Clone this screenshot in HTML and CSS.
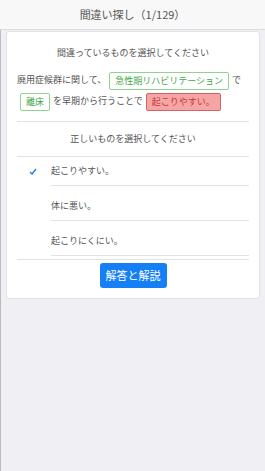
FILE: index.html
```html
<!DOCTYPE html>
<html lang="ja">
<head>
  <meta charset="UTF-8">
  <meta name="viewport" content="width=device-width, initial-scale=1.0">
  <title>間違い探し</title>
  <link rel="stylesheet" href="styles.css">
</head>
<body>
  <header class="top-bar">間違い探し（1/129）</header>

  <main class="page">
    <div class="card">
      <div class="prompt">間違っているものを選択してください</div>

      <p class="sentence">廃用症候群に関して、<span class="tag ok">急性期リハビリテーション</span>で<br><span class="tag ok">離床</span>を早期から行うことで<span class="tag bad">起こりやすい。</span></p>

      <div class="section-title">正しいものを選択してください</div>

      <ul class="choices">
        <li class="choice selected">
          <span class="mark">
            <svg width="8" height="7" viewBox="0 0 8 7"><path d="M1 4 L3 6 L7 1" fill="none" stroke="#1a7ef5" stroke-width="1.4"/></svg>
          </span>
          <span class="label">起こりやすい。</span>
        </li>
        <li class="choice">
          <span class="mark"></span>
          <span class="label">体に悪い。</span>
        </li>
        <li class="choice">
          <span class="mark"></span>
          <span class="label">起こりにくにい。</span>
        </li>
      </ul>

      <div class="actions">
        <button class="answer-btn">解答と解説</button>
      </div>
    </div>
  </main>
</body>
</html>
```

FILE: styles.css
```css
* {
  box-sizing: border-box;
}
html, body {
  height: 100%;
}
body {
  margin: 0;
  background-color: #efeff4;
  font-family: "Noto Sans CJK JP", "Noto Sans", sans-serif;
  color: #555;
  display: flex;
  flex-direction: column;
}
.top-bar {
  height: 30px;
  line-height: 29px;
  text-align: center;
  font-size: 11px;
  color: #555;
  background-color: #f8f8f8;
  border-bottom: 1px solid #dcdcdf;
}
.page {
  flex: 1;
  border-left: 1px solid #bcbcc2;
  padding: 1px 5px 0 5px;
}
.card {
  background-color: #fff;
  border: 1px solid #e1e1e6;
  border-radius: 3px;
  padding: 10px 10px 10px 10px;
}
.prompt {
  text-align: center;
  font-size: 9px;
  line-height: 22px;
  color: #555;
}
.sentence {
  margin: 5px 0 0 0;
  font-size: 9px;
  line-height: 21px;
  color: #555;
  border-bottom: 1px solid #e2e2e2;
  padding-bottom: 10px;
}
.tag {
  display: inline-block;
  vertical-align: middle;
  line-height: 10px;
  padding: 3px 5px;
  border: 1px solid #8fd38f;
  border-radius: 2px;
  margin: 0 3px;
}
.tag.ok {
  color: #3fa93f;
  background-color: #fff;
}
.tag.bad {
  color: #c23b3b;
  background-color: #f6a5a5;
  border-color: #d36464;
}
.section-title {
  text-align: center;
  font-size: 9px;
  line-height: 34px;
  color: #555;
  border-bottom: 1px solid #e2e2e2;
}
.choices {
  list-style: none;
  margin: 0;
  padding: 0 0 3px 0;
  border-bottom: 1px solid #e2e2e2;
}
.choice {
  display: flex;
  align-items: flex-end;
  font-size: 9px;
  color: #555;
}
.mark {
  width: 34px;
  padding-left: 12px;
  padding-bottom: 11px;
  line-height: 0;
}
.label {
  flex: 1;
  border-bottom: 1px solid #e2e2e2;
  line-height: 12px;
  padding: 8px 0 8px 0;
}
.choice + .choice .label {
  padding-top: 14px;
}
.actions {
  text-align: center;
  padding-top: 1px;
}
.answer-btn {
  background-color: #1580f6;
  color: #fff;
  border: none;
  border-radius: 3px;
  font-family: inherit;
  font-size: 11px;
  height: 25px;
  padding: 0 6px;
  cursor: pointer;
}
```
